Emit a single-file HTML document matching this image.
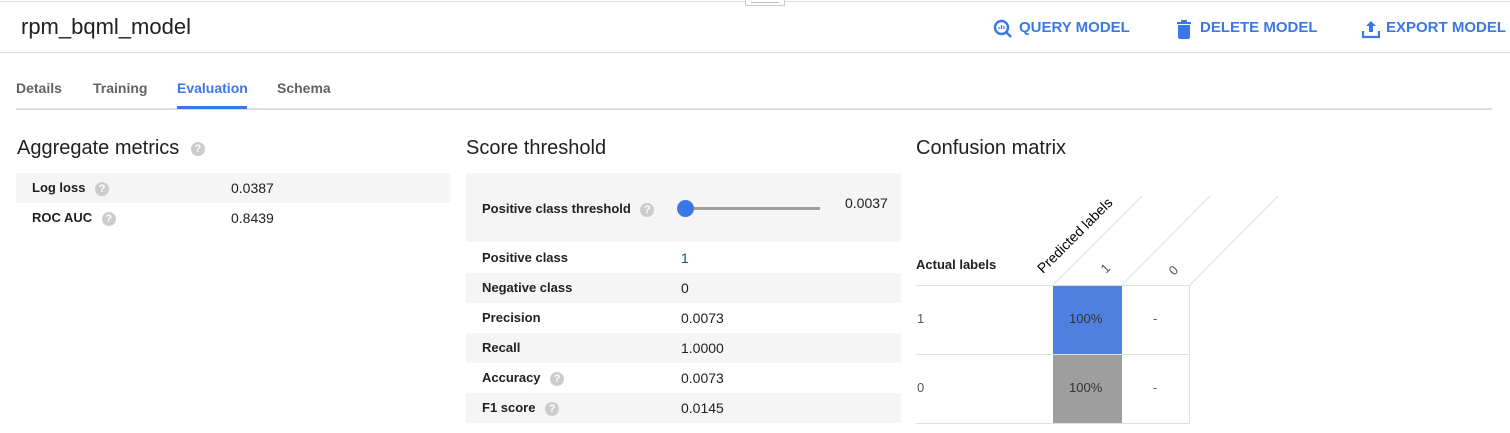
<!DOCTYPE html>
<html><head><style>
*{margin:0;padding:0;box-sizing:border-box}
body{width:1510px;height:433px;background:#fff;font-family:"Liberation Sans",Arial,sans-serif;position:relative;overflow:hidden;color:#202124}
.a{position:absolute;white-space:nowrap}
.q{display:inline-block;width:14px;height:14px;border-radius:50%;background:#ccc;color:#fff;font-size:11px;font-weight:bold;text-align:center;line-height:14px;vertical-align:middle}
.btn{color:#3b78e7;font-weight:bold;font-size:15px;top:19px}
.tab{top:80px;font-size:14px;font-weight:bold;color:#5f6368}
.h{font-size:20px;top:137px}
.row{position:absolute;height:30px;font-size:13px;line-height:30px}
.row b{position:absolute;left:16px}
.row span{position:absolute;font-size:14px}
.row b span{font-size:11px}
.g{background:#f5f5f5}
</style></head><body>
<div class="a" style="left:0;top:1px;width:1510px;height:1px;background:#dadce0"></div>
<div class="a" style="left:745px;top:0;width:40px;height:6px;border:1px solid #ccc;border-top:none;background:#fff"></div>
<div class="a" style="left:751px;top:2px;width:28px;height:1px;background:#bbb"></div>
<div class="a" style="left:21px;top:14px;font-size:22px">rpm_bqml_model</div>
<svg class="a" style="left:993px;top:19px" width="20" height="20" viewBox="0 0 20 20"><circle cx="8.5" cy="8.5" r="6.5" fill="none" stroke="#3b78e7" stroke-width="2.4"/><path d="M13 13l5 5" stroke="#3b78e7" stroke-width="2.6"/><path d="M6 10v-2M8.5 10v-4M11 10v-3" stroke="#3b78e7" stroke-width="1.3"/></svg>
<div class="a btn" style="left:1019px">QUERY MODEL</div>
<svg class="a" style="left:1176px;top:19px" width="16" height="20" viewBox="0 0 16 20"><path d="M1 3h14v2H1zM5 1h6v2H5z" fill="#3b78e7"/><path d="M2 6h12v12a2 2 0 0 1-2 2H4a2 2 0 0 1-2-2z" fill="#3b78e7"/></svg>
<div class="a btn" style="left:1200px">DELETE MODEL</div>
<svg class="a" style="left:1362px;top:19px" width="18" height="20" viewBox="0 0 18 20"><path d="M9 2l5 5h-3v6H7V7H4z" fill="#3b78e7"/><path d="M1 12v6h16v-6" fill="none" stroke="#3b78e7" stroke-width="2.2"/></svg>
<div class="a btn" style="left:1386px">EXPORT MODEL</div>
<div class="a" style="left:0;top:52px;width:1510px;height:1px;background:#dadce0"></div>

<div class="a tab" style="left:16px">Details</div>
<div class="a tab" style="left:93px">Training</div>
<div class="a tab" style="left:177px;color:#3b78e7">Evaluation</div>
<div class="a tab" style="left:277px">Schema</div>
<div class="a" style="left:16px;top:108px;width:1476px;height:2px;background:#dadce0"></div>
<div class="a" style="left:177px;top:106px;width:70px;height:3px;background:#3b78e7"></div>

<div class="a h" style="left:17px">Aggregate metrics <span class="q" style="margin-left:6px">?</span></div>
<div class="row g" style="left:16px;top:173px;width:435px"><b>Log loss <span class="q" style="position:static;margin-left:6px">?</span></b><span style="left:215px">0.0387</span></div>
<div class="row" style="left:16px;top:203px;width:435px"><b>ROC AUC <span class="q" style="position:static;margin-left:6px">?</span></b><span style="left:215px">0.8439</span></div>

<div class="a h" style="left:466px">Score threshold</div>
<div class="a g" style="left:466px;top:173px;width:435px;height:69px"></div>
<div class="a" style="left:482px;top:201px;font-size:13px;font-weight:bold">Positive class threshold <span class="q" style="margin-left:6px">?</span></div>
<div class="a" style="left:685px;top:207px;width:135px;height:3px;background:#9e9e9e"></div>
<div class="a" style="left:677px;top:200px;width:17px;height:17px;border-radius:50%;background:#3b78e7"></div>
<div class="a" style="left:845px;top:195px;font-size:14px">0.0037</div>
<div class="row" style="left:466px;top:243px;width:435px"><b>Positive class</b><span style="left:215px;color:#1a4c8c">1</span></div>
<div class="row g" style="left:466px;top:273px;width:435px"><b>Negative class</b><span style="left:215px">0</span></div>
<div class="row" style="left:466px;top:303px;width:435px"><b>Precision</b><span style="left:215px">0.0073</span></div>
<div class="row g" style="left:466px;top:333px;width:435px"><b>Recall</b><span style="left:215px">1.0000</span></div>
<div class="row" style="left:466px;top:363px;width:435px"><b>Accuracy <span class="q" style="position:static;margin-left:6px">?</span></b><span style="left:215px">0.0073</span></div>
<div class="row g" style="left:466px;top:393px;width:435px"><b>F1 score <span class="q" style="position:static;margin-left:6px">?</span></b><span style="left:215px">0.0145</span></div>

<div class="a h" style="left:916px">Confusion matrix</div>
<svg class="a" style="left:0;top:0" width="1510" height="433">
<g stroke="#e0e0e0" stroke-width="1" fill="none">
<path d="M1053 285L1142 196M1122 285L1210 196M1190 285L1278 196"/>
<path d="M916 285.5H1190M916 354.5H1190M916 423.5H1190M1189.5 285V424"/>
</g>
<rect x="1053" y="286" width="69" height="68" fill="#4f7fdf"/>
<rect x="1053" y="355" width="69" height="68" fill="#9e9e9e"/>
<text x="1043" y="274" font-size="14" font-family="Liberation Sans" transform="rotate(-45 1043 274)" fill="#000">Predicted labels</text>
<text x="1106" y="274" font-size="13" font-family="Liberation Sans" transform="rotate(-45 1106 274)" fill="#555">1</text>
<text x="1174" y="276" font-size="13" font-family="Liberation Sans" transform="rotate(-45 1174 276)" fill="#555">0</text>
</svg>
<div class="a" style="left:916px;top:257px;font-size:13px;font-weight:bold">Actual labels</div>
<div class="a" style="left:917px;top:311px;font-size:13px;color:#555">1</div>
<div class="a" style="left:917px;top:380px;font-size:13px;color:#555">0</div>
<div class="a" style="left:1069px;top:311px;font-size:13px;color:#333">100%</div>
<div class="a" style="left:1069px;top:380px;font-size:13px;color:#333">100%</div>
<div class="a" style="left:1153px;top:311px;font-size:13px;color:#555">-</div>
<div class="a" style="left:1153px;top:380px;font-size:13px;color:#555">-</div>
</body></html>
